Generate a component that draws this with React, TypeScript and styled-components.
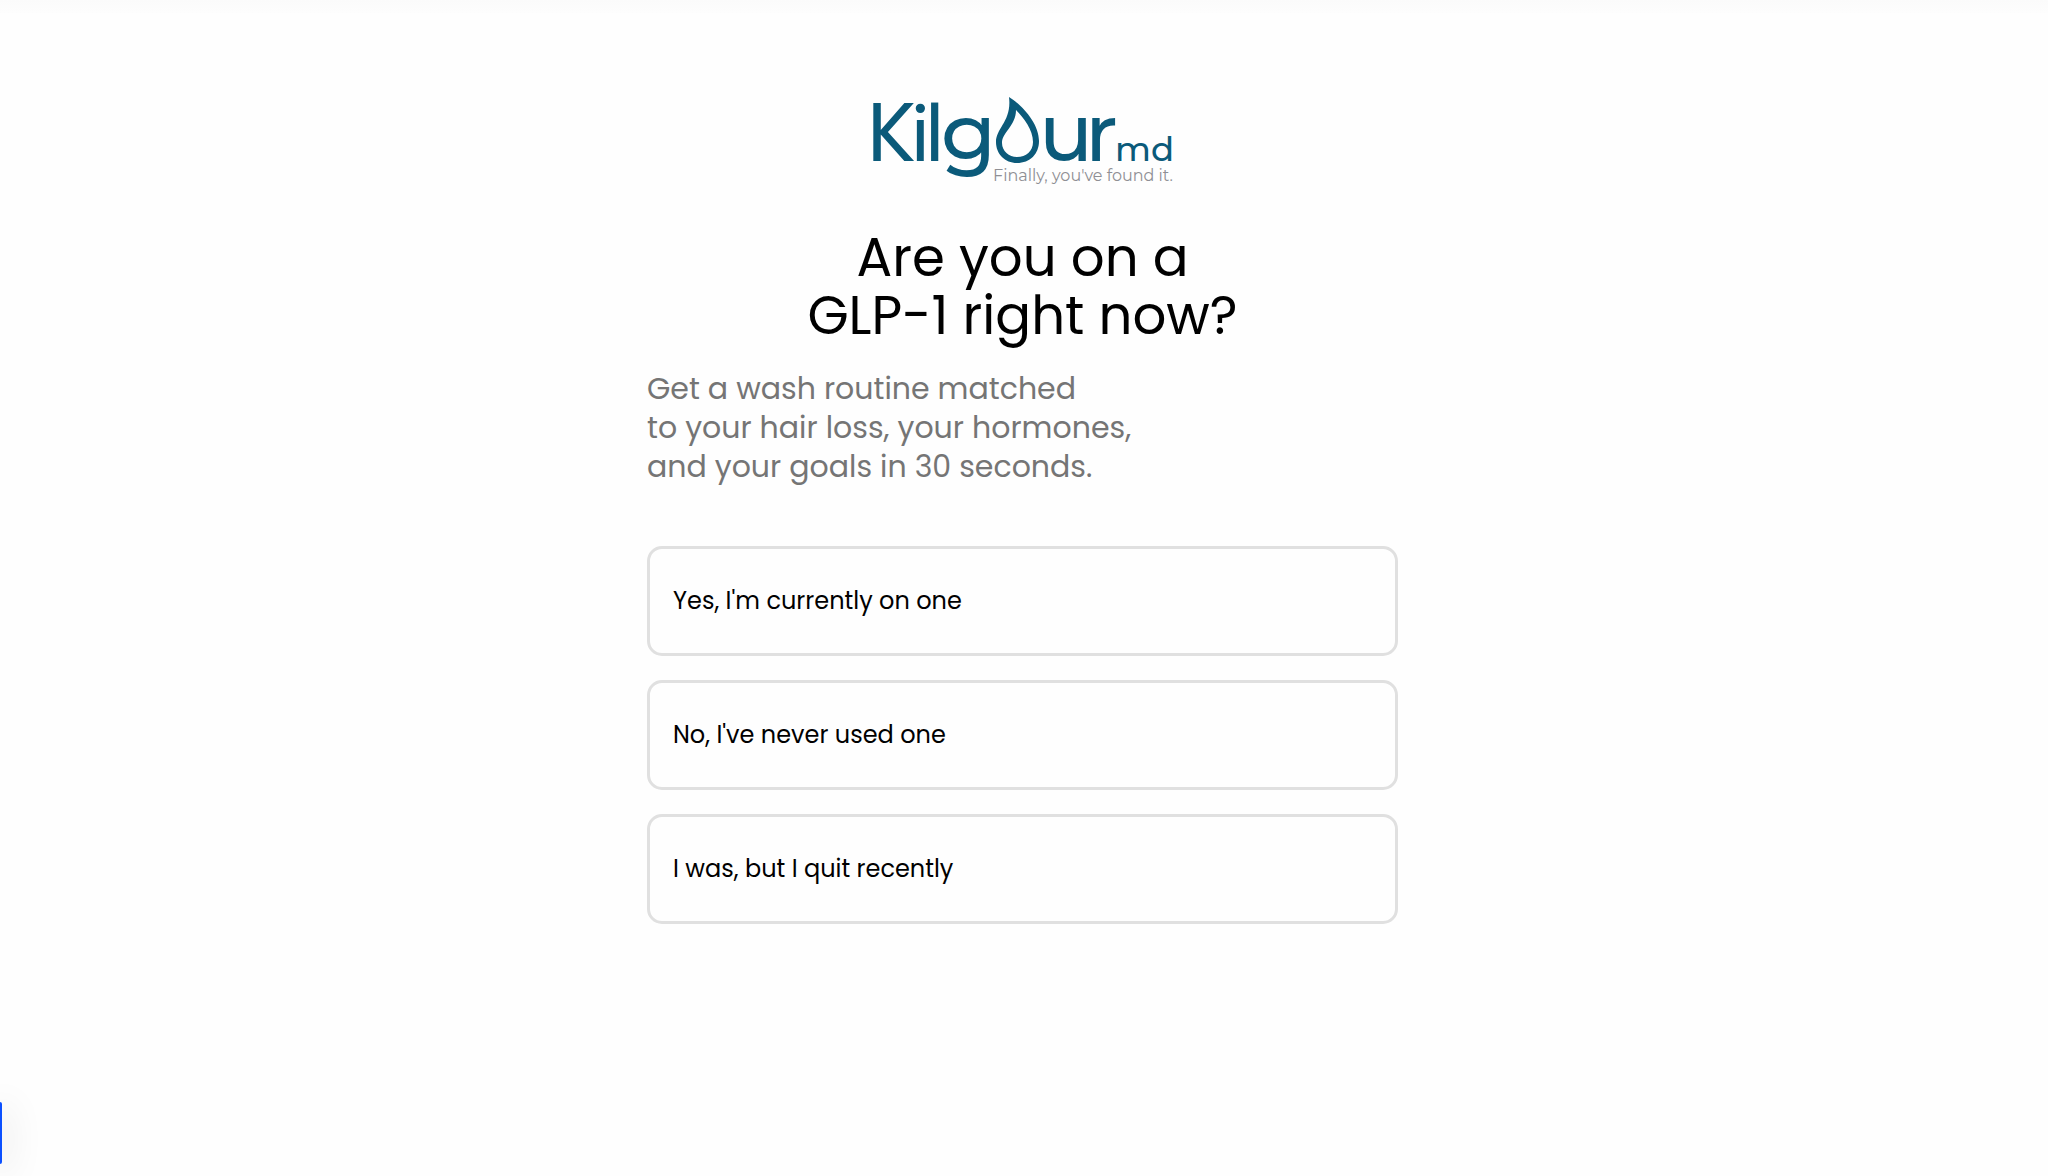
import React from "react";
import styled, { createGlobalStyle } from "styled-components";

const GlobalStyle = createGlobalStyle`
  *, *::before, *::after { box-sizing: border-box; }
  body {
    margin: 0;
    background: #fefefe;
    color: #000;
    font-family: Poppins, Inter, "Liberation Sans", sans-serif;
  }
`;

const Page = styled.div`
  min-height: 100vh;
  padding: 0 3px 48px 0;
`;

const TopShade = styled.div`
  height: 13px;
  margin-right: -3px;
  background: linear-gradient(#fbfbfb, #fdfdfd);
`;

const Quiz = styled.main`
  display: flex;
  flex-direction: column;
  width: 100%;
  max-width: 751px;
  margin: 0 auto;
  padding-top: 83px;
`;

const Logo = styled.svg`
  display: block;
  align-self: center;
  width: 302px;
  height: 94px;
  overflow: visible;
`;

const Title = styled.h1`
  margin: 39px 0 0;
  font-size: 53px;
  line-height: 58px;
  font-weight: 400;
  text-align: center;
`;

const Intro = styled.p`
  margin: 24px 0 0;
  color: #757575;
  font-size: 30px;
  line-height: 39px;
`;

const Options = styled.div`
  display: flex;
  flex-direction: column;
  gap: 24px;
  margin-top: 60px;
`;

const Option = styled.button`
  height: 110px;
  padding: 0 23px;
  border: 3px solid #e0e0e0;
  border-radius: 15px;
  background: #fefefe;
  color: #000;
  font: inherit;
  font-size: 24px;
  line-height: 36px;
  text-align: left;
  cursor: pointer;
`;

const SideTab = styled.button`
  position: fixed;
  left: 0;
  bottom: 12px;
  width: 2px;
  height: 62px;
  padding: 0;
  border: 0;
  border-radius: 0 2px 2px 0;
  background: #0b50ff;
  box-shadow: 0 6px 36px 4px rgba(0, 0, 0, 0.14);
  cursor: pointer;
`;

const answers = [
  "Yes, I'm currently on one",
  "No, I've never used one",
  "I was, but I quit recently",
];

function KilgourLogo() {
  return (
    <Logo viewBox="0 0 302 94" role="img" aria-label="Kilgour md">
      <g fill="#0b5a7a" fontFamily="Montserrat, Poppins, sans-serif" fontWeight="500">
        <text y="65" fontSize="80">
          <tspan x="-5" fontSize="82" fontFamily="Poppins, sans-serif" fontWeight="400">K</tspan>
          <tspan x="39" fontSize="76" fontFamily="Poppins, sans-serif" fontWeight="400">i</tspan>
          <tspan x="53" fontSize="79" fontFamily="Poppins, sans-serif" fontWeight="400">l</tspan>
          <tspan x="69">g</tspan>
          <tspan x="167">u</tspan>
          <tspan x="213">r</tspan>
        </text>
        <path
          fillRule="evenodd"
          d="M137 1C150 9 167 27 167 45C167 58 158 67 145 67C133 67 124 58 124 46C124 32 140 25 137 1ZM144 14C144 30 130 36 130 47C130 55 137 61 145 61C154 61 161 55 161 46C161 34 152 22 144 14Z"
        />
        <text x="243" y="65" fontSize="34">md</text>
      </g>
      <text x="121" y="85" fill="#8f8f94" fontSize="16" fontFamily="Montserrat, Inter, sans-serif">
        Finally, you've found it.
      </text>
    </Logo>
  );
}

export default function App() {
  return (
    <>
      <GlobalStyle />
      <Page>
        <TopShade />
        <Quiz>
          <KilgourLogo />
          <Title>
            Are you on a<br />
            GLP-1 right now?
          </Title>
          <Intro>
            Get a wash routine matched<br />
            to your hair loss, your hormones,<br />
            and your goals in 30 seconds.
          </Intro>
          <Options>
            {answers.map((answer) => (
              <Option key={answer} type="button">{answer}</Option>
            ))}
          </Options>
        </Quiz>
        <SideTab type="button" aria-label="Open side panel" />
      </Page>
    </>
  );
}
